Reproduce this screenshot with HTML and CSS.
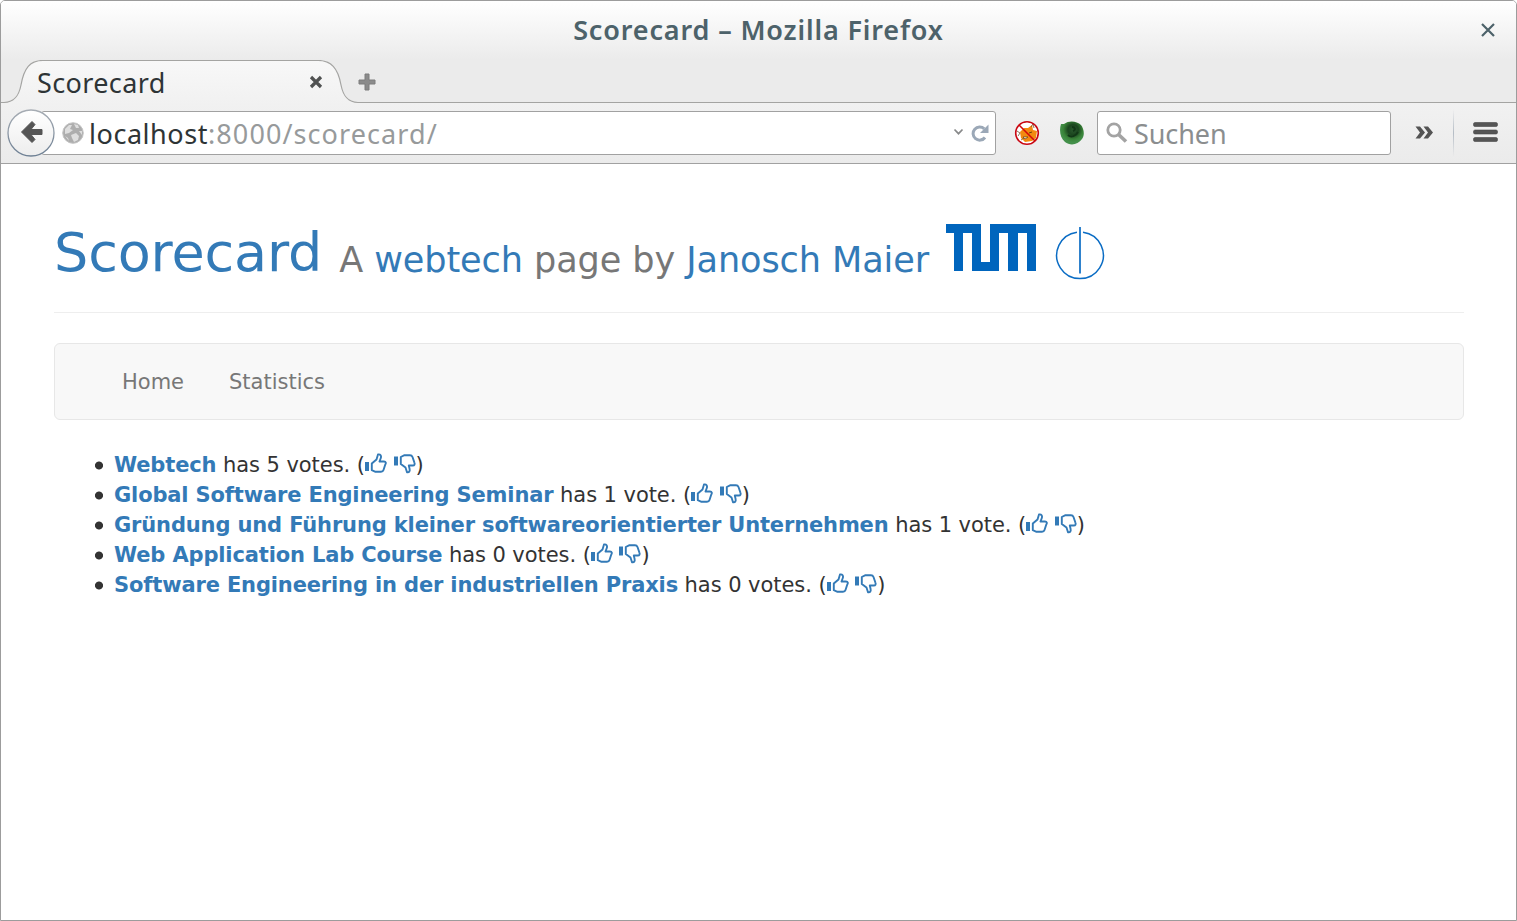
FILE: index.html
```html
<!DOCTYPE html>
<html lang="de">
<head>
<meta charset="utf-8">
<title>Scorecard</title>
<link rel="stylesheet" href="styles.css">
</head>
<body>
<svg class="defs" width="0" height="0" aria-hidden="true">
  <symbol id="up" viewBox="0 0 22 22"><path d="M0 9h4v9H0z" fill="currentColor"/><path d="M6.800 10.500L11.500 6.500 13 1.500C15.500 1 16.500 3 15.800 5L14.500 8.500H19c2 0 2.300 1.600 1.200 3.200L18.500 17c-.4 1.400-1 1.800-2.500 1.800H10.500L6.800 17.200z" fill="none" stroke="currentColor" stroke-width="1.900" stroke-linejoin="round"/></symbol>
  <symbol id="down" viewBox="0 0 22 22"><path d="M0 3.500h4v9H0z" fill="currentColor"/><path d="M6.800 4L10.500 2.200H16c1.300 0 2 .5 2.500 1.800l1.800 5.300c.8 1.700.3 3.200-1.500 3.200H14.800l.8 3.500c.5 2.300-.5 3.600-2.600 3.200L11.500 14.500 6.800 11z" fill="none" stroke="currentColor" stroke-width="1.900" stroke-linejoin="round"/></symbol>
</svg>
<div class="window">
  <div class="titlebar">
    <span class="title">Scorecard – Mozilla Firefox</span>
    <svg class="close" width="14" height="14" viewBox="0 0 14 14"><path d="M1 1l12 12M13 1L1 13" stroke="#4d626a" stroke-width="2.200"/></svg>
  </div>
  <div class="tabs">
    <svg class="tab-shape" width="1515" height="44" viewBox="0 0 1515 44">
      <defs><linearGradient id="tg" x1="0" y1="0" x2="0" y2="1"><stop offset="0" stop-color="#f8f8f8"/><stop offset="1" stop-color="#f1f1f1"/></linearGradient></defs>
      <path d="M0 42.500h3C14 42.500 18 35 20 25 23 8 29 .5 42 .5H317C330 .5 337 8 340 25 342 35 346 42.500 357 42.500V44H0z" fill="url(#tg)"/>
      <path d="M0 42.500h3C14 42.500 18 35 20 25 23 8 29 .5 42 .5H317C330 .5 337 8 340 25 342 35 346 42.500 357 42.500H1515" fill="none" stroke="#a4a4a2" stroke-width="1.200"/>
    </svg>
    <span class="tab-title">Scorecard</span>
    <svg class="tab-close" width="14" height="14" viewBox="0 0 14 14"><path d="M2 2l10 10M12 2L2 12" stroke="#505252" stroke-width="3.200"/></svg>
    <svg class="plus" width="18" height="18" viewBox="0 0 18 18"><path d="M7 1h4v6h6v4h-6v6h-4v-6h-6v-4h6z" fill="#8b8b8b" stroke="#7c7c7c"/></svg>
  </div>
  <div class="toolbar">
    <svg class="back" width="48" height="48" viewBox="0 0 48 48">
      <defs><linearGradient id="bg" x1="0" y1="0" x2="0" y2="1"><stop offset="0" stop-color="#fff"/><stop offset="1" stop-color="#ededed"/></linearGradient><linearGradient id="bs" x1="0" y1="0" x2="0" y2="1"><stop offset="0" stop-color="#a7adb4"/><stop offset="1" stop-color="#6e8094"/></linearGradient></defs>
      <circle cx="24" cy="24" r="23" fill="url(#bg)" stroke="url(#bs)" stroke-width="1.300"/>
      <path d="M14.500 23L25 12.500 28 15.500 24 20.500H35V25.500H24L28 30.500 25 33.500z" fill="#555" stroke="#555" stroke-linejoin="round"/>
    </svg>
    <div class="urlbar">
      <svg class="globe" width="22" height="22" viewBox="0 0 22 22"><circle cx="11" cy="11" r="10.300" fill="#adadad" stroke="#c4c4c4"/><path d="M3 7l4-4 3 0-2 4 3 1-4 3-4 1zM12 2l4 1 1 3-3 0zM9 13l5-2 3 3-1 4-4 2-2-4zM17 9l3 0 0 4zM3 14l3 2 1 3z" fill="#dedede"/></svg>
      <span class="url"><b>localhost</b>:8000/scorecard/</span>
      <svg class="chev" width="11" height="8" viewBox="0 0 11 8"><path d="M1.500 1.500l4 4.200 4-4.200" fill="none" stroke="#88898a" stroke-width="1.700"/></svg>
      <svg width="18" height="18" viewBox="0 0 18 18"><path d="M13.300 4.800A6.600 6.600 0 1 0 14 13.500" fill="none" stroke="#9ba8b7" stroke-width="3"/><path d="M17.500.5v8.500H9z" fill="#9ba8b7"/></svg>
    </div>
    <svg class="noscript" width="26" height="26" viewBox="0 0 26 26"><circle cx="13" cy="13" r="11.500" fill="#fff"/><path d="M6 12l4-4 4 0 4-3 1 5 4 1-1 7-4 3-7 1-4-4z" fill="#f28a10"/><path d="M3 11l3 2-2 3M17 7l2-3 1 4M7 20l3-2" fill="none" stroke="#705030" stroke-width=".8"/><path d="M9 17l5 0-3 2z" fill="#fff" stroke="#68400e" stroke-width=".7"/><path d="M15 13l3-1" stroke="#68400e"/><circle cx="13" cy="13" r="11.300" fill="none" stroke="#c90713" stroke-width="1.600"/><path d="M5 5l16 16" stroke="#d10a0a" stroke-width="1.600"/></svg>
    <svg class="green" width="24" height="24" viewBox="0 0 24 24"><defs><radialGradient id="gg" cx=".55" cy=".36" r=".55"><stop offset="0" stop-color="#2a5a2d"/><stop offset=".4" stop-color="#1b461f"/><stop offset=".75" stop-color="#398338"/><stop offset="1" stop-color="#43904a"/></radialGradient></defs><path d="M1 3l3 0C9-1 17 0 21 4c3 4 4 10 1 14-4 6-12 7-17 3C0 17-1 9 1 3z" fill="url(#gg)"/><path d="M12 6c3 0 4 3 1 4M8 14c3 3 8 1 10-3" stroke="#123817" stroke-width="2" fill="none"/></svg>
    <div class="search">
      <svg width="22" height="22" viewBox="0 0 22 22"><circle cx="8" cy="8" r="6.200" fill="none" stroke="#a3a3a3" stroke-width="2.800"/><path d="M12.500 12.500l7.500 7" stroke="#a3a3a3" stroke-width="3.600"/></svg>
      <span>Suchen</span>
    </div>
    <svg class="more" width="18" height="13" viewBox="0 0 18 13"><path d="M.5.5H5L10 6.500 5 12.500H.5L5 6.500zM8.500 .5h4.500L18 6.500 13 12.500H8.500L13 6.500z" fill="#545454"/></svg>
    <i class="sep"></i>
    <svg class="menu" width="25" height="21" viewBox="0 0 25 21"><g fill="#555" stroke="#474747" stroke-width=".6"><rect x=".5" y=".5" width="24" height="4" rx="1.600"/><rect x=".5" y="8" width="24" height="4" rx="1.600"/><rect x=".5" y="15.500" width="24" height="4" rx="1.600"/></g></svg>
  </div>
  <main class="page">
    <header class="page-header">
      <h1><a>Scorecard</a> <small>A <a>webtech</a> page by <a>Janosch Maier</a></small></h1>
      <svg class="tum" width="90" height="47" viewBox="0 0 90 47"><path d="M0 0H35V38H44V0H90V47H81V9H72V47H62V9H53V47H26V9H17V47H8V9H0z" fill="#0065bd"/></svg>
      <svg class="phi" width="50" height="54" viewBox="0 0 50 54"><path d="M22 6.200A23.300 23.300 0 1 0 28 6.200" fill="none" stroke="#0a6cc4" stroke-width="1.500"/><path d="M25 1V47.500" stroke="#0a6cc4" stroke-width="1.700"/></svg>
    </header>
    <nav class="navbar"><a>Home</a><a>Statistics</a></nav>
    <ul class="list">
      <li><b>Webtech</b> has 5 votes. (<svg class="th"><use href="#up"/></svg> <svg class="th"><use href="#down"/></svg>)</li>
      <li><b>Global Software Engineering Seminar</b> has 1 vote. (<svg class="th"><use href="#up"/></svg> <svg class="th"><use href="#down"/></svg>)</li>
      <li><b>Gründung und Führung kleiner softwareorientierter Unternehmen</b> has 1 vote. (<svg class="th"><use href="#up"/></svg> <svg class="th"><use href="#down"/></svg>)</li>
      <li><b>Web Application Lab Course</b> has 0 votes. (<svg class="th"><use href="#up"/></svg> <svg class="th"><use href="#down"/></svg>)</li>
      <li><b>Software Engineering in der industriellen Praxis</b> has 0 votes. (<svg class="th"><use href="#up"/></svg> <svg class="th"><use href="#down"/></svg>)</li>
    </ul>
  </main>
</div>
</body>
</html>
```
FILE: styles.css
```css
* { box-sizing: border-box; }
body { margin: 0; background: #fff; overflow: hidden; }
svg { flex: none; }
.defs { position: absolute; }
.window {
  height: 921px;
  border: 1px solid #9c9c9c;
  border-radius: 5px 5px 0 0;
  overflow: hidden;
  font-family: "Noto Sans", "Open Sans", sans-serif;
  color: #2e3436;
}
.titlebar {
  position: relative;
  height: 59px;
  display: flex;
  align-items: center;
  justify-content: center;
  background: linear-gradient(#fff, #ebebeb);
}
.title { font-weight: 600; font-size: 27px; letter-spacing: .85px; color: #4d626a; white-space: nowrap; padding-bottom: 2px; }
.close { position: absolute; right: 21px; top: 22px; }
.tabs {
  position: relative;
  height: 43px;
  display: flex;
  align-items: center;
  padding-left: 36px;
  background: #ebebeb;
}
.tab-shape { position: absolute; left: 0; top: 0; }
.tab-title { position: relative; width: 272px; font-size: 27px; letter-spacing: .37px; line-height: 40px; padding-top: 3px; }
.tab-close { position: relative; }
.plus { position: relative; margin-left: 35px; }
.toolbar {
  height: 61px;
  display: flex;
  align-items: center;
  padding: 0 18px 0 6px;
  background: linear-gradient(#f1f1f1, #ebebeb);
  border-bottom: 1px solid #a1a1a1;
}
.back { position: relative; z-index: 1; }
.urlbar, .search {
  height: 44px;
  display: flex;
  align-items: center;
  background: #fff;
  border: 1px solid #a1a1a1;
  border-radius: 3px;
  font-size: 27px;
  color: #8b8e8f;
}
.urlbar { width: 955px; margin-left: -14px; padding: 0 6px 0 20px; }
.url { flex: 1; margin-left: 5px; padding-top: 1px; letter-spacing: 1.08px; color: #979a9b; }
.url b { font-weight: 400; letter-spacing: .55px; color: #2e3436; }
.chev { margin: 0 7px 2px 0; }
.noscript { margin-left: 18px; }
.green { margin-left: 20px; }
.search { width: 294px; margin-left: 13px; padding-left: 8px; }
.search span { margin-left: 6px; padding-top: 1px; letter-spacing: -.1px; }
.more { margin: 0 0 2px 24px; }
.sep { width: 1px; height: 48px; margin-left: 20px; background: linear-gradient(transparent, #b4bcc5, transparent); }
.menu { margin: 0 0 2px 19px; }
.page { padding: 0 52px 0 53px; font-family: "DejaVu Sans", sans-serif; font-size: 21px; color: #333; }
.page-header {
  height: 149px;
  display: flex;
  align-items: flex-start;
  border-bottom: 1px solid #eee;
}
.page-header h1 { margin: 59px 0 0; font-size: 54px; line-height: 59px; font-weight: 400; letter-spacing: -.15px; white-space: nowrap; }
.page-header small { position: relative; top: 1px; font-size: 35.1px; letter-spacing: -.09px; color: #777; }
.page-header a, .list b, .th { color: #337ab7; }
.tum { margin: 60px 0 0 17px; }
.phi { margin: 62px 0 0 19px; }
.navbar {
  height: 77px;
  margin-top: 30px;
  display: flex;
  align-items: center;
  gap: 45px;
  padding-left: 67px;
  background: #f8f8f8;
  border: 1px solid #e7e7e7;
  border-radius: 6px;
  color: #777;
}
.list { margin: 30px 0 0; padding: 0; list-style: none; line-height: 30px; letter-spacing: -.06px; }
.list li { padding-left: 60px; height: 30px; background: radial-gradient(circle at 45px 15.500px, #333 3.600px, transparent 4.400px); white-space: nowrap; }
.list b { letter-spacing: -.145px; }
.th { width: 22px; height: 22px; vertical-align: -3px; }
```
